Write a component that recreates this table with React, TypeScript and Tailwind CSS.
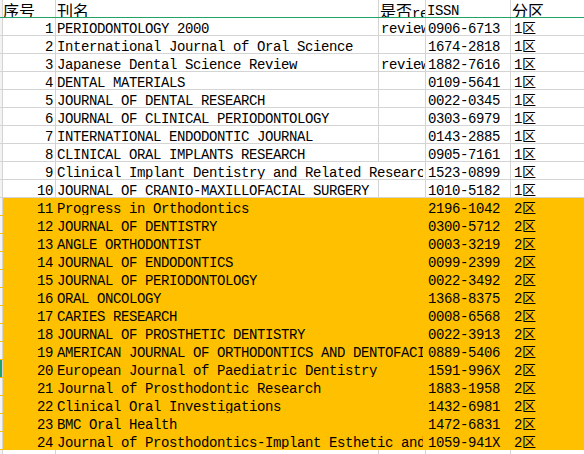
import React from "react"

type Row = {
  no: number
  name: string
  review?: string
  issn: string
  zone: string
}

const rows: Row[] = [
  { no: 1, name: "PERIODONTOLOGY 2000", review: "review", issn: "0906-6713", zone: "1区" },
  { no: 2, name: "International Journal of Oral Science", issn: "1674-2818", zone: "1区" },
  { no: 3, name: "Japanese Dental Science Review", review: "review", issn: "1882-7616", zone: "1区" },
  { no: 4, name: "DENTAL MATERIALS", issn: "0109-5641", zone: "1区" },
  { no: 5, name: "JOURNAL OF DENTAL RESEARCH", issn: "0022-0345", zone: "1区" },
  { no: 6, name: "JOURNAL OF CLINICAL PERIODONTOLOGY", issn: "0303-6979", zone: "1区" },
  { no: 7, name: "INTERNATIONAL ENDODONTIC JOURNAL", issn: "0143-2885", zone: "1区" },
  { no: 8, name: "CLINICAL ORAL IMPLANTS RESEARCH", issn: "0905-7161", zone: "1区" },
  { no: 9, name: "Clinical Implant Dentistry and Related Research", issn: "1523-0899", zone: "1区" },
  { no: 10, name: "JOURNAL OF CRANIO-MAXILLOFACIAL SURGERY", issn: "1010-5182", zone: "1区" },
  { no: 11, name: "Progress in Orthodontics", issn: "2196-1042", zone: "2区" },
  { no: 12, name: "JOURNAL OF DENTISTRY", issn: "0300-5712", zone: "2区" },
  { no: 13, name: "ANGLE ORTHODONTIST", issn: "0003-3219", zone: "2区" },
  { no: 14, name: "JOURNAL OF ENDODONTICS", issn: "0099-2399", zone: "2区" },
  { no: 15, name: "JOURNAL OF PERIODONTOLOGY", issn: "0022-3492", zone: "2区" },
  { no: 16, name: "ORAL ONCOLOGY", issn: "1368-8375", zone: "2区" },
  { no: 17, name: "CARIES RESEARCH", issn: "0008-6568", zone: "2区" },
  { no: 18, name: "JOURNAL OF PROSTHETIC DENTISTRY", issn: "0022-3913", zone: "2区" },
  { no: 19, name: "AMERICAN JOURNAL OF ORTHODONTICS AND DENTOFACIAL ORTHOPEDICS", issn: "0889-5406", zone: "2区" },
  { no: 20, name: "European Journal of Paediatric Dentistry", issn: "1591-996X", zone: "2区" },
  { no: 21, name: "Journal of Prosthodontic Research", issn: "1883-1958", zone: "2区" },
  { no: 22, name: "Clinical Oral Investigations", issn: "1432-6981", zone: "2区" },
  { no: 23, name: "BMC Oral Health", issn: "1472-6831", zone: "2区" },
  { no: 24, name: "Journal of Prosthodontics-Implant Esthetic and Reconstructive Dentistry", issn: "1059-941X", zone: "2区" },
]

const mono = "font-['Liberation_Mono','Noto_Sans_CJK_SC',monospace] text-[14px] tracking-[-0.4px]"

// text sits low in the cell, like the sheet's font does
function Txt({ children }: { children: React.ReactNode }) {
  return <span className="relative top-[3px] whitespace-nowrap">{children}</span>
}

function DataRow({ row }: { row: Row }) {
  const hot = row.zone === "2区"
  // long titles run on into the empty review column
  const spills = !row.review && row.name.length * 8 > 321
  const line = hot ? "border-transparent" : "border-[#d4d4d4]"
  return (
    <div
      className={`flex h-[18px] border-b ${line} ${hot ? "bg-[#ffc000]" : "bg-white"} ${mono} leading-[17px] text-black`}
    >
      <div
        className={`w-[3px] shrink-0 border-r border-[#d4d4d4] ${row.no === 20 ? "bg-[#21a366]" : "bg-[#f3f3f3]"}`}
      />
      <div className={`w-[53px] shrink-0 overflow-hidden border-r ${line} pr-[2px] text-right`}>
        <Txt>{row.no}</Txt>
      </div>
      {spills ? (
        <div className={`w-[370px] shrink-0 border-r ${line} pl-[1px]`}>
          <div className="w-[366px] overflow-hidden">
            <Txt>{row.name}</Txt>
          </div>
        </div>
      ) : (
        <>
          <div className={`w-[323px] shrink-0 overflow-hidden border-r ${line} pl-[1px]`}>
            <Txt>{row.name}</Txt>
          </div>
          <div className={`w-[47px] shrink-0 overflow-hidden border-r ${line} pl-[2px]`}>
            <Txt>{row.review ?? ""}</Txt>
          </div>
        </>
      )}
      <div className={`w-[85px] shrink-0 overflow-hidden border-r ${line} pl-[2px]`}>
        <Txt>{row.issn}</Txt>
      </div>
      <div className="flex-1 overflow-hidden pl-[3px]">
        <Txt>{row.zone}</Txt>
      </div>
    </div>
  )
}

export default function App() {
  const head = "font-['Noto_Sans_CJK_SC',sans-serif] text-[16px]"
  return (
    <div className="h-[454px] w-[584px] overflow-hidden bg-white">
      <div className="flex h-[18px] border-b border-[#21a366] leading-[17px] text-black">
        <div className="w-[3px] shrink-0 border-r border-[#d4d4d4] bg-[#f3f3f3]" />
        <div className={`w-[53px] shrink-0 overflow-hidden border-r border-[#d4d4d4] ${head}`}>
          <span className="relative top-[2px]">序号</span>
        </div>
        <div className={`w-[323px] shrink-0 overflow-hidden border-r border-[#d4d4d4] pl-[1px] ${head}`}>
          <span className="relative top-[2px]">刊名</span>
        </div>
        <div className="w-[47px] shrink-0 overflow-hidden whitespace-nowrap border-r border-[#d4d4d4] pl-[1px]">
          <span className={`relative top-[2px] ${head}`}>是否</span>
          <span className={mono}>
            <Txt>review</Txt>
          </span>
        </div>
        <div className={`w-[85px] shrink-0 overflow-hidden border-r border-[#d4d4d4] pl-[1px] ${mono}`}>
          <Txt>ISSN</Txt>
        </div>
        <div className={`flex-1 overflow-hidden pl-[1px] ${head}`}>
          <span className="relative top-[2px]">分区</span>
        </div>
      </div>
      {rows.map((r) => (
        <DataRow key={r.no} row={r} />
      ))}
      <div className="flex h-[18px] border-b border-[#d4d4d4]">
        <div className="w-[3px] shrink-0 border-r border-[#d4d4d4] bg-[#f3f3f3]" />
        <div className="w-[53px] shrink-0 border-r border-[#d4d4d4]" />
        <div className="w-[323px] shrink-0 border-r border-[#d4d4d4]" />
        <div className="w-[47px] shrink-0 border-r border-[#d4d4d4]" />
        <div className="w-[85px] shrink-0 border-r border-[#d4d4d4]" />
      </div>
    </div>
  )
}
